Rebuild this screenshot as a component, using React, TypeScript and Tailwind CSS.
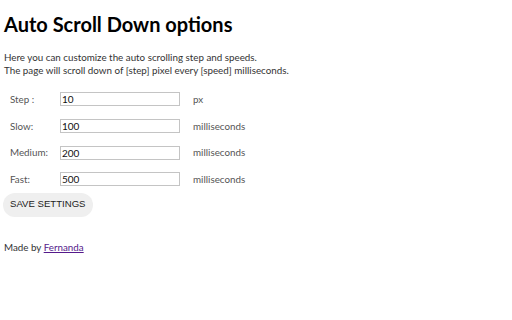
import React from 'react'

const rows = [
  { label: 'Step :', value: '10', unit: 'px' },
  { label: 'Slow:', value: '100', unit: 'milliseconds' },
  { label: 'Medium:', value: '200', unit: 'milliseconds' },
  { label: 'Fast:', value: '500', unit: 'milliseconds' },
]

export default function App() {
  return (
    <div className="w-[512px] h-[320px] bg-white px-1 font-['Lato',sans-serif] text-[#222]">
      <h1 className="pt-[12px] text-[20px] leading-[24px] font-bold text-black">Auto Scroll Down options</h1>

      <p className="mt-[15px] text-[9.8px] leading-[13px] text-[#333]">
        Here you can customize the auto scrolling step and speeds.
        <br />
        The page will scroll down of [step] pixel every [speed] milliseconds.
      </p>

      {/* settings */}
      <div className="mt-[9px] grid grid-cols-[50px_133px_auto] auto-rows-[26.67px] items-center pl-[6px] text-[9.8px] text-[#555]">
        {rows.map((row) => (
          <React.Fragment key={row.label}>
            <span>{row.label}</span>
            <input
              defaultValue={row.value}
              className="h-[14px] w-[120px] border border-[#c4c4c4] px-[1px] text-[10px] leading-[12px] text-[#111] outline-none"
            />
            <span>{row.unit}</span>
          </React.Fragment>
        ))}
      </div>

      <button className="-ml-[1px] block h-[24px] rounded-full bg-[#efefef] px-[7px] font-['Liberation_Sans',sans-serif] text-[9.6px] text-[#222]">
        SAVE SETTINGS
      </button>

      <p className="mt-[24px] text-[9.8px] leading-[13px] text-[#333]">
        Made by{' '}
        <a href="#" className="text-[#551a8b] underline">
          Fernanda
        </a>
      </p>
    </div>
  )
}
